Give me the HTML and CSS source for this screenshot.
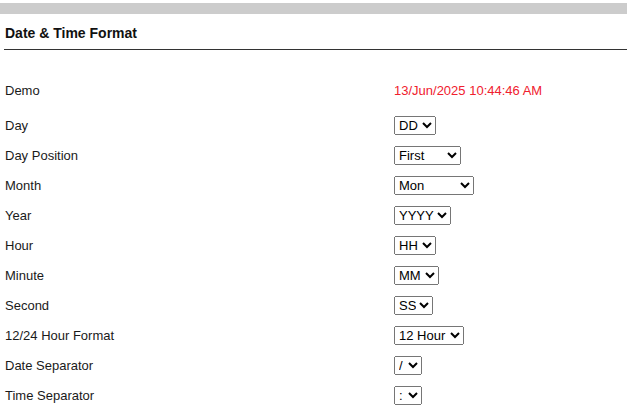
FILE: index.html
```html
<!DOCTYPE html>
<html lang="en">
<head>
  <meta charset="UTF-8">
  <title>Date &amp; Time Format</title>
  <link rel="stylesheet" href="styles.css">
</head>
<body>
  <div class="top-bar"></div>

  <div class="panel">
    <h2 class="panel-title">Date &amp; Time Format</h2>

    <div class="settings">
      <div class="row demo-row">
        <span class="label">Demo</span>
        <span class="demo">13/Jun/2025 10:44:46 AM</span>
      </div>
      <div class="row">
        <span class="label">Day</span>
        <select class="w-day"><option>DD</option><option>D</option></select>
      </div>
      <div class="row">
        <span class="label">Day Position</span>
        <select class="w-pos"><option>First</option><option>Second</option><option>Last</option></select>
      </div>
      <div class="row">
        <span class="label">Month</span>
        <select class="w-month"><option>Mon</option><option>MM</option><option>Month</option></select>
      </div>
      <div class="row">
        <span class="label">Year</span>
        <select class="w-year"><option>YYYY</option><option>YY</option></select>
      </div>
      <div class="row">
        <span class="label">Hour</span>
        <select class="w-hour"><option>HH</option><option>H</option></select>
      </div>
      <div class="row">
        <span class="label">Minute</span>
        <select class="w-min"><option>MM</option><option>M</option></select>
      </div>
      <div class="row">
        <span class="label">Second</span>
        <select class="w-sec"><option>SS</option><option>S</option></select>
      </div>
      <div class="row">
        <span class="label">12/24 Hour Format</span>
        <select class="w-fmt"><option>12 Hour</option><option>24 Hour</option></select>
      </div>
      <div class="row">
        <span class="label">Date Separator</span>
        <select class="w-sep"><option>/</option><option>-</option><option>.</option></select>
      </div>
      <div class="row">
        <span class="label">Time Separator</span>
        <select class="w-sep"><option>:</option><option>.</option></select>
      </div>
    </div>
  </div>
</body>
</html>
```

FILE: styles.css
```css
body {
  margin: 0;
  font-family: "Liberation Sans", Arial, sans-serif;
  font-size: 13px;
  color: #1a1a1a;
  background: #fff;
}
.top-bar {
  margin-top: 3px;
  height: 11px;
  background-color: #cccccc;
}
.panel {
  padding-left: 4px;
}
.panel-title {
  margin: 0;
  font-size: 14px;
  font-weight: bold;
  color: #111;
  padding: 11px 0 8px 1px;
  line-height: 16px;
  border-bottom: 1px solid #333;
}
.settings {
  padding: 25px 0 0 1px;
}
.row {
  display: flex;
  align-items: center;
  height: 30px;
}
.demo-row {
  margin-bottom: 5px;
}
.label {
  width: 389px;
}
.demo {
  color: #f0202e;
}
select {
  font-family: "Liberation Sans", Arial, sans-serif;
  font-size: 13px;
  color: #000;
  height: 19px;
  padding: 0;
}
.w-day { width: 42px; }
.w-pos { width: 67px; }
.w-month { width: 80px; }
.w-year { width: 57px; }
.w-hour { width: 42px; }
.w-min { width: 45px; }
.w-sec { width: 39px; }
.w-fmt { width: 70px; }
.w-sep { width: 28px; }
```
